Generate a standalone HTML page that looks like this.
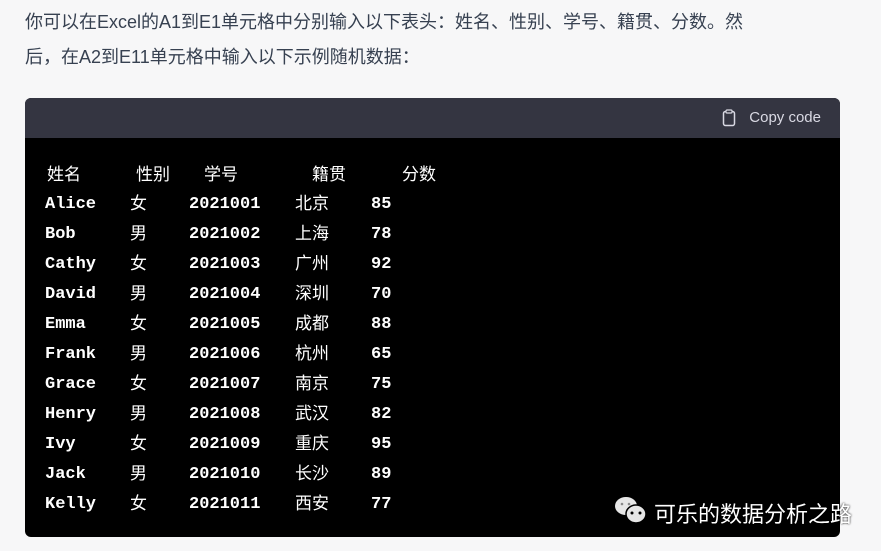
<!DOCTYPE html><html><head><meta charset="utf-8"><style>
body{margin:0;width:881px;height:551px;background:#f7f7f8;overflow:hidden;position:relative;font-family:"Liberation Sans","Noto Sans CJK SC",sans-serif}
.p{position:absolute;left:25px;color:#374151;font-size:18px;line-height:32px;white-space:nowrap}
.box{position:absolute;left:25px;top:98px;width:815px;height:439px;background:#000;border-radius:6px;overflow:hidden}
.hd{height:40px;background:#343541;position:relative}
.cp{position:absolute;right:19px;top:11px;color:#d9d9e3;font-size:15px}
.t{position:absolute;color:#fff;font-family:"Liberation Mono",monospace;font-weight:bold;font-size:17px;line-height:20px;white-space:nowrap}
.c{position:absolute;color:#fff;font-family:"Noto Sans CJK SC",sans-serif;font-weight:normal;font-size:17px;line-height:20px;white-space:nowrap}
</style></head><body>
<div class="p" style="top:6px">你可以在Excel的A1到E1单元格中分别输入以下表头：姓名、性别、学号、籍贯、分数。然</div>
<div class="p" style="top:41px">后，在A2到E11单元格中输入以下示例随机数据：</div>
<div class="box"><div class="hd">
<svg style="position:absolute;left:697px;top:11px" width="14" height="18" viewBox="0 0 14 18"><rect x="1.5" y="2.5" width="11" height="14" rx="2" fill="none" stroke="#d9d9e3" stroke-width="1.5"/><rect x="4" y="1" width="6" height="3" rx="1" fill="#343541" stroke="#d9d9e3" stroke-width="1.2"/></svg>
<span class="cp">Copy code</span></div></div>
<div id="rows"></div>
<script>
var h=[["姓名",47],["性别",136],["学号",204],["籍贯",312],["分数",402]];
var o="";h.forEach(function(c){o+='<div class="c" style="left:'+c[1]+'px;top:163px">'+c[0]+'</div>'});
var d=[["Alice","女","2021001","北京","85"],["Bob","男","2021002","上海","78"],["Cathy","女","2021003","广州","92"],["David","男","2021004","深圳","70"],["Emma","女","2021005","成都","88"],["Frank","男","2021006","杭州","65"],["Grace","女","2021007","南京","75"],["Henry","男","2021008","武汉","82"],["Ivy","女","2021009","重庆","95"],["Jack","男","2021010","长沙","89"],["Kelly","女","2021011","西安","77"]];
var xs=[45,130,189,295,371];
d.forEach(function(r,i){r.forEach(function(c,j){var cjk=(j==1||j==3);o+='<div class="'+(cjk?'c':'t')+'" style="left:'+xs[j]+'px;top:'+((cjk?192:195)+i*30)+'px">'+c+'</div>'})});
document.getElementById("rows").innerHTML=o;
</script>
<svg style="position:absolute;left:613px;top:494px" width="36" height="32" viewBox="0 0 36 32"><ellipse cx="13" cy="12" rx="11" ry="9" fill="#e6e6e6"/><ellipse cx="23" cy="20" rx="10" ry="9" fill="#e6e6e6" stroke="#000" stroke-width="1.5"/><circle cx="19" cy="19" r="1.5" fill="#000"/><circle cx="27" cy="19" r="1.5" fill="#000"/><circle cx="9" cy="10" r="1.3" fill="#888"/><circle cx="16" cy="10" r="1.3" fill="#888"/></svg>
<div style="position:absolute;left:654px;top:497px;color:#fff;font-size:22px;font-family:'Noto Sans CJK SC',sans-serif;white-space:nowrap;text-shadow:0 0 2px #000">可乐的数据分析之路</div>
</body></html>
